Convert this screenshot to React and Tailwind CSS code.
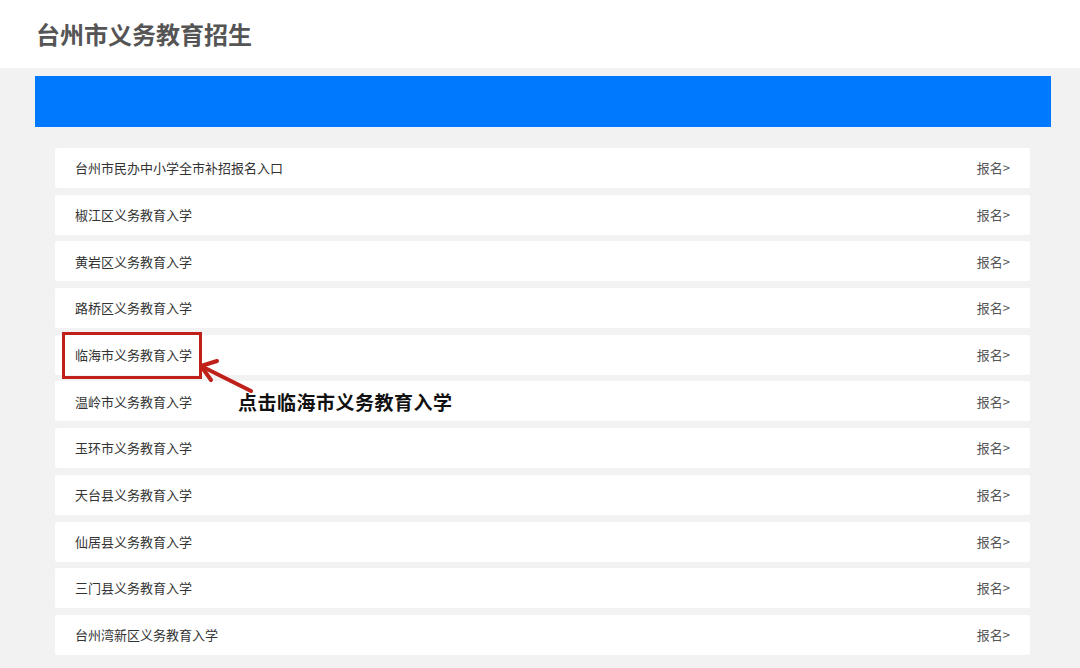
import React from "react";

const rows = [
  "台州市民办中小学全市补招报名入口",
  "椒江区义务教育入学",
  "黄岩区义务教育入学",
  "路桥区义务教育入学",
  "临海市义务教育入学",
  "温岭市义务教育入学",
  "玉环市义务教育入学",
  "天台县义务教育入学",
  "仙居县义务教育入学",
  "三门县义务教育入学",
  "台州湾新区义务教育入学",
];

const font = { fontFamily: '"Microsoft YaHei", "Noto Sans CJK SC", sans-serif' };

export default function App() {
  return (
    <div className="relative w-[1080px] h-[668px] overflow-hidden bg-[#f2f2f2]" style={font}>
      <div className="h-[68px] bg-white flex items-center pl-[36px]">
        <h1 className="text-[24px] font-bold text-[#555]">台州市义务教育招生</h1>
      </div>
      <div className="mx-[35px] mt-[8px] mr-[29px] h-[51px] bg-[#0079fe]" />
      <div className="ml-[55px] mr-[50px] mt-[21px] flex flex-col gap-[6.7px]">
        {rows.map((r) => (
          <div key={r} className="h-[40px] bg-white rounded-[2px] flex items-center justify-between pl-[20px] pr-[20px] text-[13px] text-[#333]">
            <span>{r}</span>
            <span className="text-[#555]">报名&gt;</span>
          </div>
        ))}
      </div>
      <div className="absolute left-[62px] top-[332px] w-[140px] h-[47px] border-[3px] border-[#c0201a]" />
      <svg className="absolute left-[195px] top-[355px]" width="70" height="45" viewBox="0 0 70 45">
        <line x1="56" y1="36" x2="10" y2="13" stroke="#c0201a" strokeWidth="4" strokeLinecap="round" />
        <polyline points="22,6 6,11 16,25" fill="none" stroke="#c0201a" strokeWidth="4" strokeLinejoin="round" strokeLinecap="round" />
      </svg>
      <div className="absolute left-[238px] top-[388px] text-[19px] font-bold text-[#111] tracking-[0.5px]">点击临海市义务教育入学</div>
    </div>
  );
}
